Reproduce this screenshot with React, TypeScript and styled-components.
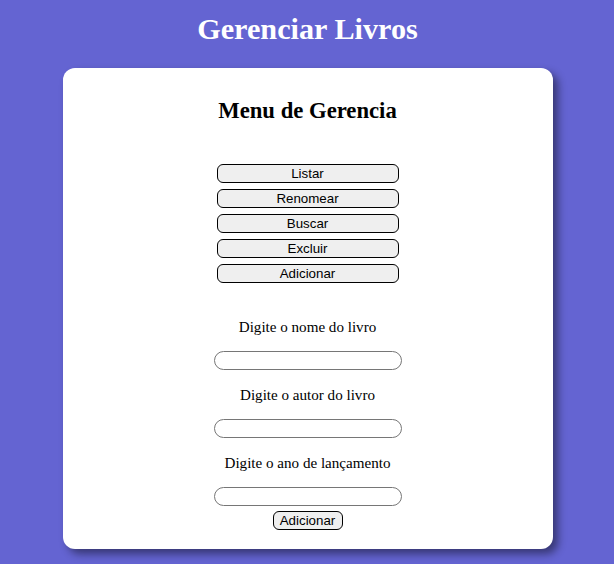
import React from "react";
import styled, { createGlobalStyle } from "styled-components";

const Global = createGlobalStyle`
  html, body { margin: 0; padding: 0; }
  body {
    background: #6464d2;
    font-family: "Liberation Serif", "Times New Roman", serif;
    min-height: 564px;
    overflow: hidden;
  }
`;

const Page = styled.div`
  display: flex;
  flex-direction: column;
  align-items: center;
  padding-top: 11px;
`;

const Title = styled.h1`
  margin: 0 0 0 1px;
  color: #ffffff;
  font-size: 30.2px;
  font-weight: bold;
  line-height: 36px;
  text-align: center;
`;

const Card = styled.div`
  box-sizing: border-box;
  margin-top: 21px;
  margin-left: 1px;
  width: 490px;
  background: #ffffff;
  border-radius: 12px;
  box-shadow: 5px 5px 8px rgba(0, 0, 0, 0.45);
  padding: 29px 0 19px;
  display: flex;
  flex-direction: column;
  align-items: center;
`;

const Subtitle = styled.h2`
  margin: 0 0 39px;
  font-size: 22.7px;
  font-weight: bold;
  line-height: 28px;
  color: #000;
`;

const Menu = styled.div`
  display: flex;
  flex-direction: column;
  gap: 6px;
  margin-bottom: 35px;
`;

const MenuButton = styled.button<{ $w?: number }>`
  box-sizing: border-box;
  width: ${(p) => p.$w ?? 182}px;
  height: 19px;
  padding: 0;
  background: #efefef;
  border: 1px solid #000;
  border-radius: 6px;
  font-family: "Liberation Sans", Arial, sans-serif;
  font-size: 13.33px;
  line-height: 17px;
  color: #000;
`;

const Field = styled.div`
  display: flex;
  flex-direction: column;
  align-items: center;
  gap: 15px;
  margin-bottom: 16px;
  &:last-of-type { margin-bottom: 5px; }
`;

const Label = styled.label`
  font-size: 15.1px;
  line-height: 18px;
  color: #000;
`;

const Input = styled.input`
  box-sizing: border-box;
  width: 188px;
  height: 19px;
  border: 1px solid #767676;
  border-radius: 10px;
  background: #fff;
  padding: 0 8px;
  outline: none;
`;

export default function App() {
  return (
    <>
      <Global />
      <Page>
        <Title>Gerenciar Livros</Title>
        <Card>
          <Subtitle>Menu de Gerencia</Subtitle>
          <Menu>
            <MenuButton>Listar</MenuButton>
            <MenuButton>Renomear</MenuButton>
            <MenuButton>Buscar</MenuButton>
            <MenuButton>Excluir</MenuButton>
            <MenuButton>Adicionar</MenuButton>
          </Menu>
          <Field>
            <Label>Digite o nome do livro</Label>
            <Input />
          </Field>
          <Field>
            <Label>Digite o autor do livro</Label>
            <Input />
          </Field>
          <Field>
            <Label>Digite o ano de lançamento</Label>
            <Input />
          </Field>
          <MenuButton $w={70}>Adicionar</MenuButton>
        </Card>
      </Page>
    </>
  );
}
